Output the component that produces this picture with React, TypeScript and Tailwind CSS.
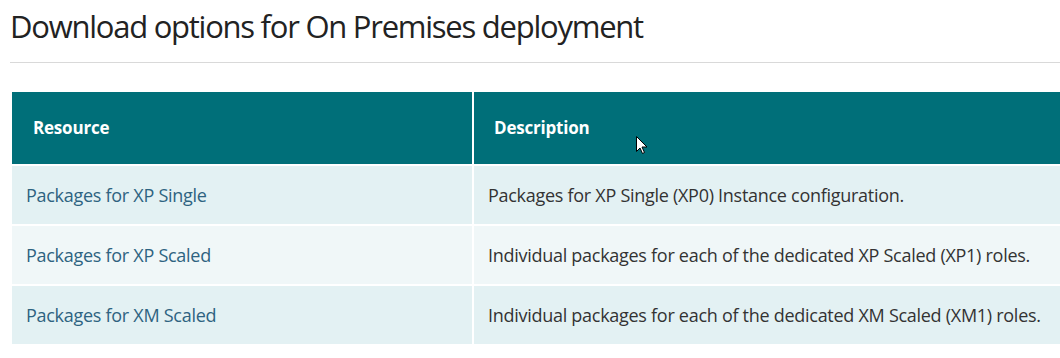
import React from "react";

const rows = [
  { r: "Packages for XP Single", d: "Packages for XP Single (XP0) Instance configuration.", bg: "bg-[#e3f1f3]" },
  { r: "Packages for XP Scaled", d: "Individual packages for each of the dedicated XP Scaled (XP1) roles.", bg: "bg-[#f0f7f8]" },
  { r: "Packages for XM Scaled", d: "Individual packages for each of the dedicated XM Scaled (XM1) roles.", bg: "bg-[#e3f1f3]" },
];

export default function App() {
  return (
    <div className="w-[1060px] h-[358px] bg-white overflow-hidden relative" style={{ fontFamily: "'Open Sans', sans-serif" }}>
      <div className="pl-[10px] pt-[6px]">
        <h1 className="text-[31px] leading-[40px] text-[#222] tracking-[-1.25px]">Download options for On Premises deployment</h1>
      </div>
      <div className="ml-[10px] mt-[16px] h-px bg-[#d9d9d9]" />
      <div className="ml-[12px] mt-[29px] flex flex-col gap-[2px]">
        <div className="flex h-[72px] gap-[2px]">
          <div className="w-[460px] bg-[#006f79] flex items-center pl-[21px] text-white font-bold text-[17px] tracking-[-0.2px]">Resource</div>
          <div className="flex-1 bg-[#006f79] flex items-center pl-[20px] text-white font-bold text-[17px] tracking-[-0.2px]">Description</div>
        </div>
        {rows.map((row) => (
          <div key={row.r} className="flex h-[58px] gap-[2px]">
            <div className={`w-[460px] ${row.bg} flex items-center pl-[14px] text-[#2e6381] text-[18px] tracking-[-0.28px]`}>{row.r}</div>
            <div className={`flex-1 ${row.bg} flex items-center pl-[14px] text-[#333] text-[18px] tracking-[-0.28px]`}>{row.d}</div>
          </div>
        ))}
      </div>
      <svg className="absolute left-[636px] top-[136px]" width="13" height="19" viewBox="0 0 13 19">
        <path d="M0.5 0.5 L0.5 15.5 L4 12 L6.5 17.5 L8.5 16.5 L6 11 L11 11 Z" fill="white" stroke="black" strokeWidth="1" />
      </svg>
    </div>
  );
}
